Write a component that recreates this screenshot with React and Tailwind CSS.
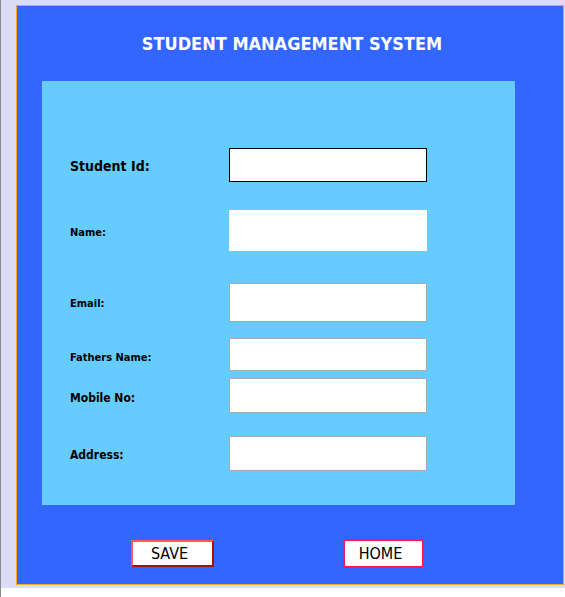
import React from 'react';

const FIELDS = [
  { label: 'Student Id:', size: 'text-[14px]', pt: 'pt-[2px]', h: 'h-[34px]', mt: 'mt-[67px]', border: 'border border-black' },
  { label: 'Name:', size: 'text-[11px]', pt: 'pt-[5px]', h: 'h-[41px]', mt: 'mt-[28px]', border: '' },
  { label: 'Email:', size: 'text-[11px]', pt: 'pt-[4px]', h: 'h-[39px]', mt: 'mt-[32px]', border: 'border border-[#a9a9a9]' },
  { label: 'Fathers Name:', size: 'text-[11px]', pt: 'pt-[7px]', h: 'h-[33px]', mt: 'mt-[16px]', border: 'border border-[#a9a9a9]' },
  { label: 'Mobile No:', size: 'text-[12px]', pt: 'pt-[5px]', h: 'h-[35px]', mt: 'mt-[7px]', border: 'border border-[#a9a9a9]' },
  { label: 'Address:', size: 'text-[12px]', pt: 'pt-[2px]', h: 'h-[35px]', mt: 'mt-[23px]', border: 'border border-[#a9a9a9]' },
];

const FieldRow = ({ field }) => (
  <div className={`flex items-center ${field.mt}`}>
    <label className={`w-[159px] font-bold text-black ${field.pt} ${field.size}`}>{field.label}</label>
    <input
      type="text"
      className={`w-[198px] bg-white outline-none ${field.h} ${field.border}`}
    />
  </div>
);

const App = () => {
  return (
    <div className="w-full h-[597px] bg-white border-l border-[#8a8a8a] font-['DejaVu_Sans',sans-serif] font-stretch-condensed">
      <div className="bg-[#dcdcf6] pl-[15px] pr-[1px] pt-[5px] pb-[3px]">
        <div className="flex flex-col h-[580px] border border-[#f5a623] bg-[#3366ff]">
          <h1 className="pt-[27px] pl-[4px] text-center text-[18px] leading-[21px] font-bold text-white">
            STUDENT MANAGEMENT SYSTEM
          </h1>

          {/* form panel */}
          <div className="flex flex-col mt-[27px] ml-[25px] w-[473px] h-[424px] bg-[#66ccff] pl-[28px]">
            {FIELDS.map(f => (
              <FieldRow key={f.label} field={f} />
            ))}
          </div>

          <div className="flex items-center mt-[34px] ml-[114px]">
            <button className="w-[83px] h-[27px] pr-[6px] bg-white border-2 border-t-[#ff5a5a] border-l-[#ff5a5a] border-r-[#a01010] border-b-[#a01010] text-[16px] text-black leading-none">
              SAVE
            </button>
            <button className="ml-[129px] w-[81px] h-[29px] pr-[6px] bg-white border-2 border-[#ff1a4a] rounded-[3px] text-[16px] text-black leading-none">
              HOME
            </button>
          </div>
        </div>
      </div>
    </div>
  );
};

export default App;
